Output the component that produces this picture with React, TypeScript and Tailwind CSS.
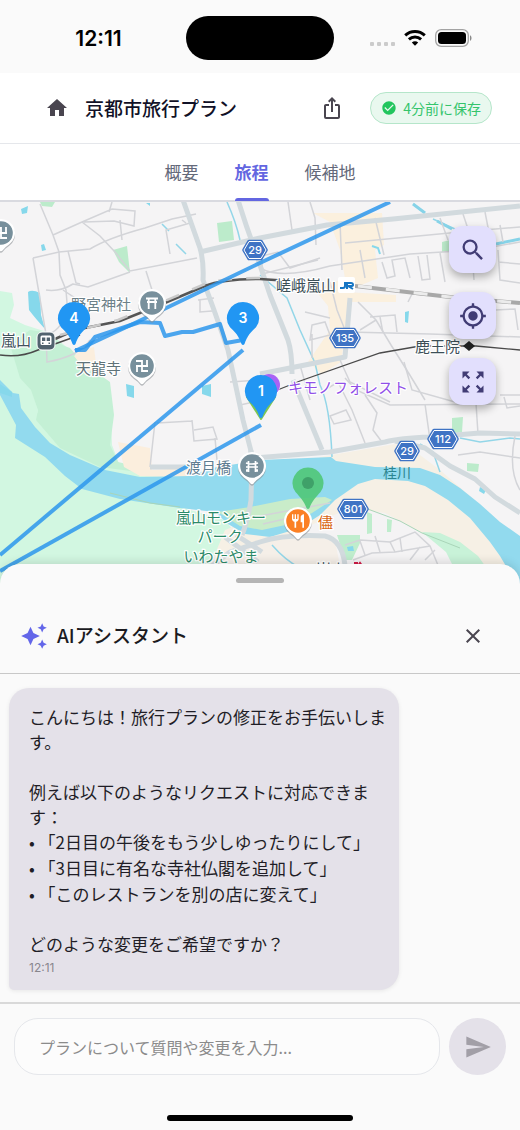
import { useState } from "react";
import type { ReactNode } from "react";
import {
  MdAutoAwesome,
  MdCheckCircle,
  MdClose,
  MdHome,
  MdIosShare,
  MdMyLocation,
  MdRestaurant,
  MdSearch,
  MdSend,
  MdZoomOutMap,
} from "react-icons/md";

const TABS = ["概要", "旅程", "候補地"];

function StatusBar() {
  return (
    <div className="grid h-[73px] shrink-0 grid-cols-[1fr_148px_1fr] items-center bg-[#fafafa] pb-[1px]">
      <span className="pt-[5px] pl-[11px] text-center font-['Inter',sans-serif] text-[21px] font-semibold text-black">12:11</span>
      <div className="mt-1 h-[44px] rounded-full bg-black" />
      <div className="flex items-center justify-end gap-[9px] pt-[3px] pr-12">
        <div className="flex gap-[3px] pt-3">
          {[0, 1, 2, 3].map((dot) => (
            <span key={dot} className="size-1 rounded-[1px] bg-[#cbcbcb]" />
          ))}
        </div>
        <svg width="22" height="16" viewBox="0 0 22 16" fill="none" stroke="#000" strokeWidth="3" aria-hidden="true">
          <path d="M1.2 5.4C6.8.2 15.2.2 20.8 5.4" />
          <path d="M4.9 9.3c3.5-3.2 8.700-3.200 12.200 0" />
          <path d="M11 15.800 7.800 12.400c1.800-1.600 4.600-1.600 6.400 0z" fill="#000" stroke="none" />
        </svg>
        <svg width="37" height="18" viewBox="0 0 37 18" aria-hidden="true">
          <rect x="0.700" y="0.700" width="32.600" height="16.600" rx="5.500" fill="none" stroke="#a3a3a3" strokeWidth="1.300" />
          <rect x="3" y="3" width="28" height="12" rx="3.500" />
          <path d="M35 6.200c2 .8 2 4.800 0 5.600z" fill="#8a8a8a" />
        </svg>
      </div>
    </div>
  );
}

function Header() {
  return (
    <header className="flex h-[71px] shrink-0 items-center border-b border-[#e5e7eb] bg-white pr-7 pl-[45px]">
      <a href="#home" aria-label="ホーム" className="text-[#49454f]">
        <MdHome size={24} />
      </a>
      <h1 className="ml-4 flex-1 text-[19px] font-medium text-[#111127]">京都市旅行プラン</h1>
      <button type="button" aria-label="共有" className="text-[#49454f]">
        <MdIosShare size={24} />
      </button>
      <div className="ml-[26px] flex h-8 items-center gap-1.5 rounded-full border border-[#b5e6ca] bg-[#e9f8ef] px-2.5 text-sm text-[#35c46c]">
        <MdCheckCircle size={16} className="text-[#22c55e]" />
        4分前に保存
      </div>
    </header>
  );
}

function Tabs() {
  const [active, setActive] = useState("旅程");
  return (
    <nav className="flex h-[58px] shrink-0 justify-center gap-9 border-b-2 border-[#d9dae0] bg-white">
      {TABS.map((tab) => (
        <button
          key={tab}
          type="button"
          onClick={() => setActive(tab)}
          className={
            tab === active
              ? "relative text-[17px] font-bold text-[#6366e1] after:absolute after:inset-x-0 after:-bottom-[1px] after:h-[3px] after:rounded-t after:bg-[#6366e1]"
              : "text-[17px] text-[#64697a]"
          }
        >
          {tab}
        </button>
      ))}
    </nav>
  );
}

/* ---- map drawing ---- */

function Shield({ x, y, label }: { x: number; y: number; label: string }) {
  const w = label.length > 2 ? 14 : 11;
  return (
    <g transform={`translate(${x} ${y})`}>
      <path
        d={`M${-w} 0 L${-w + 5} -8.500 H${w - 5} L${w} 0 L${w - 5} 8.500 H${-w + 5} Z`}
        fill="#3f73c4"
        stroke="#3f73c4"
        strokeWidth="3.500"
        strokeLinejoin="round"
      />
      <path d={`M${-w} 0 L${-w + 5} -8.500 H${w - 5} L${w} 0 L${w - 5} 8.500 H${-w + 5} Z`} fill="#3f73c4" stroke="#fff" strokeWidth="1" />
      <text y="4" textAnchor="middle" fill="#fff" className="font-['Inter',sans-serif] text-[11px] font-medium">
        {label}
      </text>
    </g>
  );
}

function Poi({ x, y, color, children }: { x: number; y: number; color: string; children?: ReactNode }) {
  return (
    <g transform={`translate(${x} ${y})`}>
      <path d="M0-14a14 14 0 0 1 8 25.500Q4 14 1.500 17.500 0 19-1.500 17.500-4 14-8 11.500A14 14 0 0 1 0-14Z" fill="#8b8f94" opacity="0.600" transform="translate(0 1.500)" />
      <path d="M0-14a14 14 0 0 1 8 25.500Q4 14 1.500 17.500 0 19-1.500 17.500-4 14-8 11.500A14 14 0 0 1 0-14Z" fill="#fff" />
      <circle r="11.800" fill={color} />
      {children}
    </g>
  );
}

function Pin({ x, y, label }: { x: number; y: number; label: string }) {
  return (
    <g transform={`translate(${x} ${y})`}>
      <path d="M0-16A16 16 0 0 1 13 9.300C8 14 4 18 1.500 26Q0 28-1.500 26C-4 18-8 14-13 9.300A16 16 0 0 1 0-16Z" fill="#2196f3" />
      <text y="5" textAnchor="middle" fill="#fff" className="font-['Inter',sans-serif] text-[14px] font-semibold">
        {label}
      </text>
    </g>
  );
}

function MapLabel({ x, y, color, anchor, children }: { x: number; y: number; color: string; anchor?: "middle"; children: string }) {
  return (
    <text x={x} y={y} fill={color} stroke="#fff" strokeWidth="2.500" strokeLinejoin="round" paintOrder="stroke" textAnchor={anchor} className="text-[15px]">
      {children}
    </text>
  );
}

const MAJOR_ROADS = [
  "M183 200 200 248Q204 262 203 280L214 310 228 350 236 387 243 420 252 455 251 500Q248 520 242 535",
  "M238 200Q246 226 255 250L270 295 288 340Q292 352 292 374",
  "M293 380 322 450",
  "M200 252 260 238 327 225 393 219 520 206",
  "M253 458 330 452 385 442Q400 438 430 437L480 433 520 434",
  "M395 441 425 448 450 466 475 479 495 497 520 513",
  "M260 374 300 366 345 357 350 298",
  "M251 450 250 458",
  "M200 575 230 552 260 542Q285 534 325 536 342 540 345 565",
  "M236 535 262 552 M225 537 258 562",
  "M150 467H190",
];

const MINOR_ROADS = [
  "M40 204 53 235 59 252 60 275 66 290 67 303Q64 330 48 334",
  "M33 258 59 252 90 249Q108 238 145 228L172 219 196 214",
  "M53 235 82 222 112 209 135 211 134 226 114 221 84 222 M112 202 109 212",
  "M82 222 100 236 115 252 130 271 197 258",
  "M68 251 76 283 80 284",
  "M46 290Q60 292 73 284L88 287 130 272",
  "M146 271 152 290 M63 290 78 300 78 318",
  "M33 258 46 334 47 362Q80 356 90 340",
  "M170 254 166 230 190 223 M120 220 122 240 M182 220 186 223",
  "M198 300 214 298 M200 300 200 312 212 311",
  "M150 467 155 422 M157 423 192 421 M192 420 194 441 217 439 213 427 194 430 M215 438 217 460",
  "M230 382 260 380 M240 405 258 401 M262 256 262 274 318 260",
  "M288 202 292 230 M310 202 315 218 316 245",
  "M262 256 278 252 290 268 320 258",
  "M260 268Q280 280 330 266L410 254 475 250 520 242",
  "M340 222 342 270 M375 218 384 255 M360 250 365 278",
  "M382 262 387 278 395 276 392 260 405 258 410 278 M418 256 422 280 430 279 427 255 M440 253 445 282",
  "M345 243 460 232 520 227 M440 218 448 240 M463 214 475 250 M485 212 492 248",
  "M472 252 474 280 M500 225 503 242 M498 250 500 280 520 283 M498 262 520 264",
  "M330 282 337 310 345 330 M358 302 376 320 391 345 408 372",
  "M305 312 330 318 M312 325 325 322 330 335 310 340Z M312 358 312 334",
  "M348 332 430 334 520 337 M370 317 395 315 397 332 M380 317 383 333",
  "M408 372 425 400 M376 320 360 330 M404 362 412 390 455 402",
  "M408 302 412 294 440 296 M480 305 482 335 M495 310 515 309 518 330",
  "M300 365 310 400 M340 360 350 382 390 402 M345 378 356 390 390 405 520 404",
  "M325 390 338 382 352 410 365 443 M330 416 346 410 351 420 334 424Z",
  "M425 404 430 440 M365 395 377 413 373 430 382 442",
  "M475 388 478 434 M500 395 520 395 M504 397 507 408 520 406",
  "M515 436Q508 470 520 490 M458 455 480 452 520 458",
  "M345 545 360 540 390 542 395 552 M360 541 365 555 M375 536 380 552 M390 542 415 532 430 546 440 570",
  "M400 538 402 552 M353 560 372 553 395 552 430 546 M410 560 420 547 M425 560 435 550",
  "M260 516 330 503 M263 524 302 515",
];

const WATER = [
  "M162 224 169 231 M176 244 186 254",
  "M227 202Q236 222 240 240",
  "M413 204 425 213 M433 219 455 229",
  "M260 275 287 298 300 330 315 363 320 385Q330 405 332 457",
  "M420 444 433 452 440 472",
  "M460 438 480 442 510 438 520 439",
  "M272 545Q285 560 300 568",
];

function MapCanvas() {
  return (
    <svg viewBox="0 202 520 383" preserveAspectRatio="xMidYMin slice" className="absolute inset-0 size-full" role="img" aria-label="京都嵐山の地図">
      <rect y="200" width="520" height="400" fill="#f5f4f5" />

      {/* parks and woods */}
      <path d="M0 291 12 293 14 305 10 318 25 325 50 333 70 350 85 370 110 385 112 445 120 466 190 475 180 507 225 520 245 545 260 600H0Z" fill="#d2f7e1" />
      <path d="M30 330 50 333Q58 345 70 348L82 362 110 382 114 415 110 445 118 462 135 466 138 472 100 467 60 448 36 420 38 410 31 390 20 378 10 345Z" fill="#c4f0d5" />
      <path d="M0 372 25 385 38 411 34 422 10 400Z" fill="#d2f7e1" />
      <path d="M113 250 127 246 130 273 119 262Z M217 223 232 221 234 240 219 242Z M40 202 55 202 52 207 42 206Z M442 242 450 240 450 251 442 252Z M452 418 463 417 462 432 452 434Z M467 463 479 464 478 472 467 471Z" fill="#bcebcb" />
      {/* shops and river banks */}
      <path d="M313 213 382 213 384 245 375 250 378 278 345 292 396 295 396 302 350 302 341 362 322 374 308 362 330 330 328 306 315 290 345 278 340 250 330 222Z" fill="#fbeed9" opacity="0.850" />
      <path d="M118 442 150 448 152 470 190 468 190 478 140 476 124 467Z M82 350 94 347 96 364 88 374 74 356Z" fill="#fbeedd" />
      <path d="M320 457 395 444 412 449 440 470 480 505 520 540V600L480 572 458 548 420 532 385 518 335 520 290 540 200 590 225 530 300 500Z" fill="#f6f0e5" />
      <path d="M215 556 250 545 310 536 335 541 343 580H200Z" fill="#f5efe8" />
      <path d="M350 508 385 513 420 532 458 548 478 580H345L340 540 300 530Z" fill="#f4f3f4" />
      <path d="M422 532 440 533 460 542 478 556 488 570H455L446 552Z" fill="#c8f2d8" />
      <path d="M337 535 360 535 360 543 352 560 345 560Z M367 512 372 514 372 533 367 534Z M387 519 392 520 391 532 387 532Z" fill="#bfedcd" />

      {/* rivers and ponds */}
      <path
        d="M0 380 13 393 19 394 21 408 35 427 50 443 70 455 105 470 140 477 190 476 212 468 260 460 331 457 336 461 375 467 420 468 440 475 460 488 480 504 500 522 520 536V590L500 556 490 542 470 518 448 500 425 486 408 481 375 479 358 484 335 500 320 515 300 528 270 537 245 534 228 524 215 512 180 508 120 499 82 489 65 476 45 457 15 438 16 425 0 395Z"
        fill="#92daee"
      />
      <path d="M218 512 250 507 290 499 325 497 332 500 312 513 290 524 262 530 240 526Z" fill="#c9ecc9" />
      <path d="M28 292Q32 289 40 293L41 315 45 329Q35 318 29 310Z M21 209 28 206 27 213 22 214Z M41 245 44 244 46 250 42 251Z M126 384 134 386 134 398 127 396Z M202 386 211 384 211 397 202 394Z M146 203H150V206ZM405 312 409 311 408 323 405 322Z M0 384 12 392V397L0 393Z M347 547 353 546 354 551 348 551Z M480 487 486 490 484 494 479 491Z" fill="#86d8eb" />
      <path d="M372 246 378 248 380 254" fill="none" stroke="#86d8eb" strokeWidth="2" />
      {WATER.map((d) => (
        <path key={d} d={d} fill="none" stroke="#93d6e8" strokeWidth="1.500" />
      ))}
      <path d="M496 244 520 239 M413 204 425 213 M437 221 452 229" stroke="#86d3e8" strokeWidth="3" />

      {/* roads */}
      {MINOR_ROADS.map((d) => (
        <path key={d} d={d} fill="none" stroke="#d3d4d8" strokeWidth="1.500" />
      ))}
      {MAJOR_ROADS.map((d) => (
        <path key={d} d={d} fill="none" stroke="#d2dade" strokeWidth="5" strokeLinejoin="round" />
      ))}
      <path d="M110 493 150 503 180 507 M365 508 400 521 422 533 460 548" fill="none" stroke="#a9d5b8" />

      {/* railways */}
      <path d="M0 355Q20 358 38 350L80 335" fill="none" stroke="#4a4a4a" strokeWidth="1.500" />
      <path d="M55 339 75 330 120 321 160 305 205 286Q222 279 260 279L290 281" fill="none" stroke="#555" strokeWidth="2.500" />
      <path d="M60 335 118 320 160 303 205 284Q222 278 260 278" fill="none" stroke="#c9c9c9" strokeWidth="2.500" strokeDasharray="14 14" />
      <path d="M355 286 450 297 520 303" fill="none" stroke="#a8a8a8" strokeWidth="4" />
      <path d="M358 286 450 297 520 303" fill="none" stroke="#ececec" strokeWidth="3" strokeDasharray="14 14" />
      <path d="M270 393 300 381 380 353 420 346H476L520 350" fill="none" stroke="#4a4a4a" strokeWidth="1.300" />

      {/* trip route */}
      <g fill="none" stroke="#2d96ec" strokeOpacity="0.850" strokeWidth="4" strokeLinejoin="round">
        <path d="M0 571 261 425" />
        <path d="M0 555 243 350" />
        <path d="M75 351 135 323 262 262 390 202" />
        <path d="M75 350 85 350 95 337 140 322 160 323 165 336 182 332 193 332 220 324 226 343 243 340" />
      </g>

      {/* labels */}
      <g>
        <MapLabel x={71} y={310} color="#6d8189">野宮神社</MapLabel>
        <MapLabel x={76} y={374} color="#5f7379">天龍寺</MapLabel>
        <MapLabel x={1} y={346} color="#41525c">嵐山</MapLabel>
        <MapLabel x={186} y={473} color="#5f7d91">渡月橋</MapLabel>
        <MapLabel x={276} y={291} color="#3c4f57">嵯峨嵐山</MapLabel>
        <MapLabel x={415} y={352} color="#3c4f57">鹿王院</MapLabel>
        <MapLabel x={288} y={393} color="#9150e8">キモノフォレスト</MapLabel>
        <MapLabel x={221} y={523} color="#2c8a68" anchor="middle">嵐山モンキー</MapLabel>
        <MapLabel x={220} y={542} color="#2c8a68" anchor="middle">パーク</MapLabel>
        <MapLabel x={221} y={562} color="#2c8a68" anchor="middle">いわたやま</MapLabel>
        <MapLabel x={318} y={528} color="#d86716">儘</MapLabel>
        <MapLabel x={316} y={575} color="#3c4f57">嵐山</MapLabel>
        <text x="383" y="478" fill="#2c8590" className="text-[14px]">桂川</text>
      </g>
      <path d="M355 573V563H357V567L360 563 363 567V564" fill="none" stroke="#d11b47" strokeWidth="2" />

      <Shield x={255} y={250} label="29" />
      <Shield x={345} y={338} label="135" />
      <Shield x={407} y={451} label="29" />
      <Shield x={443} y={439} label="112" />
      <Shield x={353} y={509} label="801" />

      {/* stations */}
      <rect x="338" y="277" width="17" height="16" rx="2" fill="#fff" />
      <path d="M340 288H343Q345 288 345 286V282 M347 289V283H351Q353 283 353 285 353 286 351 286H348L353 289" fill="none" stroke="#1676c4" strokeWidth="2" />
      <path d="M463 346 469 341 475 346 469 351Z" fill="#222" />
      <rect x="37" y="332" width="18" height="18" rx="5" fill="#51626e" stroke="#fff" />
      <path d="M42 335.500H50Q51.500 335.500 51.500 337V343.500Q51.500 345 50 345H42Q40.500 345 40.500 343.500V337Q40.500 335.500 42 335.500ZM42.500 345 41 347.500M49.500 345 51 347.500" fill="#fff" />
      <path d="M42 337.500H45.300V341H42ZM46.700 337.500H50V341H46.700ZM42 342.500H43.500V344H42ZM48.500 342.500H50V344H48.500Z" fill="#51626e" />

      {/* places */}
      <Poi x={152} y={303} color="#78909c">
        <path d="M-6-4.500H6M-5-1H5M-3.300-4V6M3.300-4V6" stroke="#fff" strokeWidth="1.800" />
      </Poi>
      <Poi x={142} y={366} color="#78909c">
        <path d="M0-6V6M-6 0H6M-5 0V6M5 0V-6M0-5H-6M0 5H6" stroke="#fff" strokeWidth="1.800" />
      </Poi>
      <Poi x={1} y={233} color="#78909c">
        <path d="M0-6V6M-6 0H6M-5 0V6M5 0V-6M0-5H-6M0 5H6" stroke="#fff" strokeWidth="1.800" />
      </Poi>
      <Poi x={252} y={466} color="#78909c">
        <path d="M-6-3Q0-1 6-3M-6 1H6M-6 4H-4M4 4H6M-3.500-5V6M3.500-5V6M-3.500 5H-6M3.500 5H6" fill="none" stroke="#fff" strokeWidth="1.700" />
      </Poi>
      <Poi x={298} y={521} color="#fb8024">
        <MdRestaurant x={-8} y={-8} size={16} color="#fff" />
      </Poi>
      <circle cx="268" cy="386" r="12" fill="#fff" />
      <circle cx="269" cy="385" r="11" fill="#a963f5" />

      {/* itinerary pins */}
      <path d="M247 397 261 419 275 397Z" fill="#7cc653" stroke="#7cc653" strokeWidth="2" strokeLinejoin="round" />
      <Pin x={261} y={391} label="1" />
      <Pin x={243} y={318} label="3" />
      <Pin x={74} y={318} label="4" />
      <g transform="translate(308 483)" opacity="0.900">
        <path d="M0-15.500A15.500 15.500 0 0 1 12.500 9C8 14 4 18 1.500 25Q0 27-1.500 25C-4 18-8 14-12.500 9A15.500 15.500 0 0 1 0-15.500Z" fill="#50c878" />
        <circle r="6" fill="#379b5b" />
      </g>
    </svg>
  );
}

function MapPanel() {
  const button =
    "flex size-[47px] items-center justify-center rounded-[14px] bg-[#e2dffd] text-[#413c75] shadow-[0_4px_9px_rgba(0,0,0,0.3)]";
  return (
    <main className="relative min-h-[380px] flex-1 overflow-hidden">
      <MapCanvas />
      <div className="absolute top-6 right-6 flex flex-col gap-[19px]">
        <button type="button" aria-label="地図を検索" className={button}>
          <MdSearch size={28} />
        </button>
        <button type="button" aria-label="現在地" className={button}>
          <MdMyLocation size={28} />
        </button>
        <button type="button" aria-label="全体を表示" className={button}>
          <MdZoomOutMap size={28} />
        </button>
      </div>
    </main>
  );
}

/* ---- assistant sheet ---- */

function AssistantMessage() {
  return (
    <article className="w-[390px] max-w-full rounded-[20px] rounded-bl-[5px] bg-[#e4e1e9] pt-4 pr-3 pb-3.5 pl-5 text-[17px] leading-[25px] text-[#1f1d26] shadow-[0_1px_4px_rgba(0,0,0,0.08)]">
      <p>こんにちは！旅行プランの修正をお手伝いします。</p>
      <p className="mt-[25px]">例えば以下のようなリクエストに対応できます：</p>
      <ul className="leading-[26px]">
        <li>• 「2日目の午後をもう少しゆったりにして」</li>
        <li>• 「3日目に有名な寺社仏閣を追加して」</li>
        <li>• 「このレストランを別の店に変えて」</li>
      </ul>
      <p className="mt-6">どのような変更をご希望ですか？</p>
      <time className="mt-1 block font-['Inter',sans-serif] text-xs leading-4 text-[#88868d]">12:11</time>
    </article>
  );
}

function AssistantSheet() {
  const [text, setText] = useState("");
  return (
    <section
      aria-labelledby="assistant-title"
      className="relative -mt-5 shrink-0 rounded-t-[20px] bg-[#fafafa] shadow-[0_-2px_10px_rgba(0,0,0,0.12)]"
    >
      <div className="flex h-[34px] justify-center pt-3.5">
        <div className="h-[5px] w-12 rounded-full bg-[#b5b5b5]" />
      </div>
      <div className="flex h-[76px] items-center border-b border-[#c8c8c8] pr-[35px] pl-5">
        <MdAutoAwesome size={28} className="text-[#6366e9]" />
        <h2 id="assistant-title" className="ml-[9px] flex-1 text-[19px] font-medium text-[#1b1b1f]">AIアシスタント</h2>
        <button type="button" aria-label="閉じる" className="text-[#49454f]">
          <MdClose size={24} />
        </button>
      </div>
      <div className="px-[9px] pt-3.5 pb-3">
        <AssistantMessage />
      </div>
      <form
        className="flex items-center gap-[9px] border-t-2 border-[#d9d9d9] px-3.5 pt-3.5"
        onSubmit={(e) => e.preventDefault()}
      >
        <input
          type="text"
          aria-label="メッセージ"
          value={text}
          onChange={(e) => setText(e.target.value)}
          placeholder="プランについて質問や変更を入力..."
          className="h-[57px] min-w-0 flex-1 rounded-[24px] border border-[#e5e7eb] bg-[#fcfcfc] px-6 text-base text-[#1f1d26] outline-none placeholder:text-[#8b8b8b]"
        />
        <button type="submit" aria-label="送信" className="flex size-[57px] items-center justify-center rounded-full bg-[#e4e1e9] text-[#a29fa7]">
          <MdSend size={28} />
        </button>
      </form>
      <div className="flex h-[55px] items-end justify-center pb-[9px]">
        <div className="h-1.5 w-[186px] rounded-full bg-black" />
      </div>
    </section>
  );
}

export default function App() {
  return (
    <div lang="ja" className="flex min-h-screen flex-col bg-[#fafafa] font-['Noto_Sans_CJK_JP',sans-serif]">
      <StatusBar />
      <Header />
      <Tabs />
      <MapPanel />
      <AssistantSheet />
    </div>
  );
}
